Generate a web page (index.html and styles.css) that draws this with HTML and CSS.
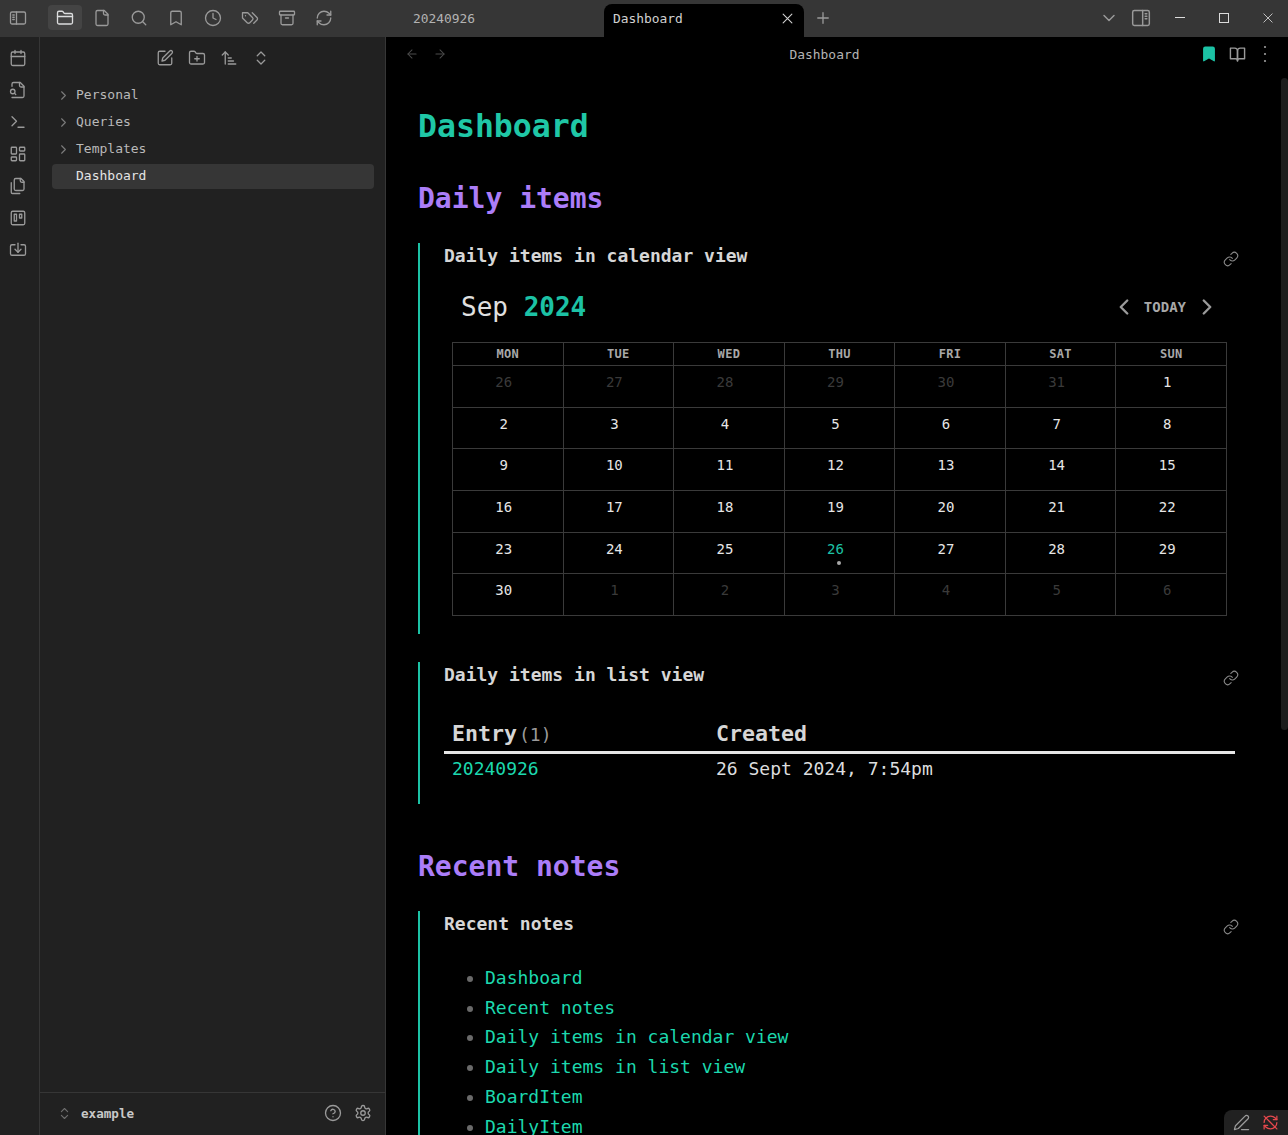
FILE: index.html
```html
<!DOCTYPE html>
<html lang="en">
<head>
  <meta charset="UTF-8">
  <title>Dashboard</title>
  <link rel="stylesheet" href="styles.css">
</head>
<body>
  <div class="app">
    <header class="titlebar">
      <div class="title-left">
        <span class="ti first"><svg viewBox="0 0 24 24"><rect x="2" y="4" width="20" height="16" rx="2"/><path d="M10 4v16M5 8h2M5 11h2M5 14h2"/></svg></span>
        <span class="ti active"><svg viewBox="0 0 24 24"><path d="M20 20a2 2 0 0 0 2-2V8a2 2 0 0 0-2-2h-7.9a2 2 0 0 1-1.69-.9L9.6 3.9A2 2 0 0 0 7.93 3H4a2 2 0 0 0-2 2v13a2 2 0 0 0 2 2Z"/><path d="M2 10h20"/></svg></span>
        <span class="ti"><svg viewBox="0 0 24 24"><path d="M15 2H6a2 2 0 0 0-2 2v16a2 2 0 0 0 2 2h12a2 2 0 0 0 2-2V7Z"/><path d="M14 2v4a2 2 0 0 0 2 2h4"/></svg></span>
        <span class="ti"><svg viewBox="0 0 24 24"><circle cx="11" cy="11" r="8"/><path d="m21 21-4.3-4.3"/></svg></span>
        <span class="ti"><svg viewBox="0 0 24 24"><path d="m19 21-7-4-7 4V5a2 2 0 0 1 2-2h10a2 2 0 0 1 2 2v16z"/></svg></span>
        <span class="ti"><svg viewBox="0 0 24 24"><circle cx="12" cy="12" r="10"/><path d="M12 6v6l4 2"/></svg></span>
        <span class="ti"><svg viewBox="0 0 24 24"><path d="M9 5H2v7l6.29 6.29c.94.94 2.48.94 3.42 0l3.58-3.58c.94-.94.94-2.48 0-3.42L9 5Z"/><path d="M6 9.01V9"/><path d="m15 5 6.3 6.3a2.4 2.4 0 0 1 0 3.4L17 19"/></svg></span>
        <span class="ti"><svg viewBox="0 0 24 24"><rect x="2" y="3" width="20" height="5" rx="1"/><path d="M4 8v11a2 2 0 0 0 2 2h12a2 2 0 0 0 2-2V8"/><path d="M10 12h4"/></svg></span>
        <span class="ti"><svg viewBox="0 0 24 24"><path d="M3 12a9 9 0 0 1 9-9 9.75 9.75 0 0 1 6.74 2.74L21 8"/><path d="M21 3v5h-5"/><path d="M21 12a9 9 0 0 1-9 9 9.75 9.75 0 0 1-6.74-2.74L3 16"/><path d="M8 16H3v5"/></svg></span>
      </div>
      <div class="tabs">
        <div class="tab">20240926</div>
        <div class="tab tab-current">
          <span>Dashboard</span>
          <svg viewBox="0 0 24 24"><path d="M5 5l14 14M19 5 5 19"/></svg>
        </div>
        <svg class="tab-plus" viewBox="0 0 24 24"><path d="M5 12h14M12 5v14"/></svg>
      </div>
      <div class="title-right">
        <svg class="tab-list" viewBox="0 0 24 24"><path d="m6 9 6 6 6-6"/></svg>
        <svg class="right-toggle" viewBox="0 0 24 24"><rect x="2" y="3" width="20" height="18" rx="2"/><path d="M14 3v18M17 7h2M17 10h2M17 13h2"/></svg>
        <div class="win-btns">
          <span class="win-min"></span>
          <span class="win-max"></span>
          <svg viewBox="0 0 12 12"><path d="m1 1 10 10M11 1 1 11"/></svg>
        </div>
      </div>
    </header>

    <div class="workspace">
      <nav class="ribbon">
        <svg viewBox="0 0 24 24"><path d="M8 2v4M16 2v4"/><rect x="3" y="4" width="18" height="18" rx="2"/><path d="M3 10h18"/></svg>
        <svg viewBox="0 0 24 24"><path d="M4 22h14a2 2 0 0 0 2-2V7l-5-5H6a2 2 0 0 0-2 2v3"/><path d="M14 2v4a2 2 0 0 0 2 2h4"/><path d="M5 17a3 3 0 1 0 0-6 3 3 0 0 0 0 6z"/><path d="m9 18-1.5-1.5"/></svg>
        <svg viewBox="0 0 24 24"><path d="m4 17 6-6-6-6"/><path d="M12 19h8"/></svg>
        <svg viewBox="0 0 24 24"><rect x="3" y="3" width="7" height="9" rx="1"/><rect x="14" y="3" width="7" height="5" rx="1"/><rect x="14" y="12" width="7" height="9" rx="1"/><rect x="3" y="16" width="7" height="5" rx="1"/></svg>
        <svg viewBox="0 0 24 24"><path d="M20 7h-3a2 2 0 0 1-2-2V2"/><path d="M9 18a2 2 0 0 1-2-2V4a2 2 0 0 1 2-2h7l4 4v10a2 2 0 0 1-2 2Z"/><path d="M3 7.6v12.8A1.6 1.6 0 0 0 4.6 22h9.8"/></svg>
        <svg viewBox="0 0 24 24"><rect x="3" y="3" width="18" height="18" rx="2"/><rect x="7" y="7" width="3" height="9"/><rect x="14" y="7" width="3" height="5"/></svg>
        <svg viewBox="0 0 24 24"><path d="M12 3v12"/><path d="m8 11 4 4 4-4"/><path d="M8 5H4a2 2 0 0 0-2 2v10a2 2 0 0 0 2 2h16a2 2 0 0 0 2-2V7a2 2 0 0 0-2-2h-4"/></svg>
      </nav>

      <aside class="sidebar">
        <div class="nav-actions">
          <svg viewBox="0 0 24 24"><path d="M12 3H5a2 2 0 0 0-2 2v14a2 2 0 0 0 2 2h14a2 2 0 0 0 2-2v-7"/><path d="M18.375 2.625a2.121 2.121 0 1 1 3 3L12 15l-4 1 1-4Z"/></svg>
          <svg viewBox="0 0 24 24"><path d="M12 10v6M9 13h6"/><path d="M20 20a2 2 0 0 0 2-2V8a2 2 0 0 0-2-2h-7.9a2 2 0 0 1-1.69-.9L9.6 3.9A2 2 0 0 0 7.93 3H4a2 2 0 0 0-2 2v13a2 2 0 0 0 2 2Z"/></svg>
          <svg viewBox="0 0 24 24"><path d="m3 8 4-4 4 4"/><path d="M7 4v16"/><path d="M11 12h4M11 16h7M11 20h10"/></svg>
          <svg viewBox="0 0 24 24"><path d="m7 15 5 5 5-5"/><path d="m7 9 5-5 5 5"/></svg>
        </div>
        <ul class="tree">
          <li class="tree-item"><svg viewBox="0 0 24 24"><path d="m9 18 6-6-6-6"/></svg>Personal</li>
          <li class="tree-item"><svg viewBox="0 0 24 24"><path d="m9 18 6-6-6-6"/></svg>Queries</li>
          <li class="tree-item"><svg viewBox="0 0 24 24"><path d="m9 18 6-6-6-6"/></svg>Templates</li>
          <li class="tree-item selected">Dashboard</li>
        </ul>
        <div class="vault-bar">
          <svg class="vault-switch" viewBox="0 0 24 24"><path d="m7 15 5 5 5-5"/><path d="m7 9 5-5 5 5"/></svg>
          <span class="vault-name">example</span>
          <svg viewBox="0 0 24 24"><circle cx="12" cy="12" r="10"/><path d="M9.09 9a3 3 0 0 1 5.83 1c0 2-3 3-3 3"/><path d="M12 17h.01"/></svg>
          <svg viewBox="0 0 24 24"><path d="M12.22 2h-.44a2 2 0 0 0-2 2v.18a2 2 0 0 1-1 1.73l-.43.25a2 2 0 0 1-2 0l-.15-.08a2 2 0 0 0-2.73.73l-.22.38a2 2 0 0 0 .73 2.73l.15.1a2 2 0 0 1 1 1.72v.51a2 2 0 0 1-1 1.74l-.15.09a2 2 0 0 0-.73 2.73l.22.38a2 2 0 0 0 2.73.73l.15-.08a2 2 0 0 1 2 0l.43.25a2 2 0 0 1 1 1.73V20a2 2 0 0 0 2 2h.44a2 2 0 0 0 2-2v-.18a2 2 0 0 1 1-1.73l.43-.25a2 2 0 0 1 2 0l.15.08a2 2 0 0 0 2.73-.73l.22-.39a2 2 0 0 0-.73-2.73l-.15-.08a2 2 0 0 1-1-1.74v-.5a2 2 0 0 1 1-1.74l.15-.09a2 2 0 0 0 .73-2.73l-.22-.38a2 2 0 0 0-2.73-.73l-.15.08a2 2 0 0 1-2 0l-.43-.25a2 2 0 0 1-1-1.73V4a2 2 0 0 0-2-2z"/><circle cx="12" cy="12" r="3"/></svg>
        </div>
      </aside>

      <main class="main">
        <div class="view-header">
          <div class="view-nav">
            <svg viewBox="0 0 24 24"><path d="m12 19-7-7 7-7"/><path d="M19 12H5"/></svg>
            <svg viewBox="0 0 24 24"><path d="m12 5 7 7-7 7"/><path d="M5 12h14"/></svg>
          </div>
          <div class="view-title">Dashboard</div>
          <div class="view-actions">
            <svg class="bookmarked" viewBox="0 0 24 24"><path d="m19 21-7-4-7 4V5a2 2 0 0 1 2-2h10a2 2 0 0 1 2 2v16z"/></svg>
            <svg class="reading" viewBox="0 0 24 24"><path d="M2 3h6a4 4 0 0 1 4 4v14a3 3 0 0 0-3-3H2z"/><path d="M22 3h-6a4 4 0 0 0-4 4v14a3 3 0 0 1 3-3h7z"/></svg>
            <svg class="more" viewBox="0 0 24 24"><path d="M12 5h.01M12 12h.01M12 19h.01"/></svg>
          </div>
        </div>

        <div class="note">
          <h1>Dashboard</h1>
          <h2>Daily items</h2>

          <section class="embed embed-calendar">
            <svg class="embed-link" viewBox="0 0 24 24"><path d="M10 13a5 5 0 0 0 7.54.54l3-3a5 5 0 0 0-7.07-7.07l-1.72 1.71"/><path d="M14 11a5 5 0 0 0-7.54-.54l-3 3a5 5 0 0 0 7.07 7.07l1.71-1.71"/></svg>
            <h4>Daily items in calendar view</h4>
            <div class="cal-head">
              <div class="cal-title">Sep <b>2024</b></div>
              <div class="cal-nav">
                <svg viewBox="0 0 24 24"><path d="m15 18-6-6 6-6"/></svg>
                <span>TODAY</span>
                <svg viewBox="0 0 24 24"><path d="m9 18 6-6-6-6"/></svg>
              </div>
            </div>
            <table class="cal">
              <thead>
                <tr><th>MON</th><th>TUE</th><th>WED</th><th>THU</th><th>FRI</th><th>SAT</th><th>SUN</th></tr>
              </thead>
              <tbody>
                <tr><td class="out">26</td><td class="out">27</td><td class="out">28</td><td class="out">29</td><td class="out">30</td><td class="out">31</td><td>1</td></tr>
                <tr><td>2</td><td>3</td><td>4</td><td>5</td><td>6</td><td>7</td><td>8</td></tr>
                <tr><td>9</td><td>10</td><td>11</td><td>12</td><td>13</td><td>14</td><td>15</td></tr>
                <tr><td>16</td><td>17</td><td>18</td><td>19</td><td>20</td><td>21</td><td>22</td></tr>
                <tr><td>23</td><td>24</td><td>25</td><td class="today">26<i class="dot"></i></td><td>27</td><td>28</td><td>29</td></tr>
                <tr><td>30</td><td class="out">1</td><td class="out">2</td><td class="out">3</td><td class="out">4</td><td class="out">5</td><td class="out">6</td></tr>
              </tbody>
            </table>
          </section>

          <section class="embed embed-list">
            <svg class="embed-link" viewBox="0 0 24 24"><path d="M10 13a5 5 0 0 0 7.54.54l3-3a5 5 0 0 0-7.07-7.07l-1.72 1.71"/><path d="M14 11a5 5 0 0 0-7.54-.54l-3 3a5 5 0 0 0 7.07 7.07l1.71-1.71"/></svg>
            <h4>Daily items in list view</h4>
            <table class="dv">
              <thead>
                <tr><th class="dv-first">Entry<span class="count">(1)</span></th><th>Created</th></tr>
              </thead>
              <tbody>
                <tr><td><a href="#">20240926</a></td><td>26 Sept 2024, 7:54pm</td></tr>
              </tbody>
            </table>
          </section>

          <h2 class="h2-recent">Recent notes</h2>

          <section class="embed embed-recent">
            <svg class="embed-link" viewBox="0 0 24 24"><path d="M10 13a5 5 0 0 0 7.54.54l3-3a5 5 0 0 0-7.07-7.07l-1.72 1.71"/><path d="M14 11a5 5 0 0 0-7.54-.54l-3 3a5 5 0 0 0 7.07 7.07l1.71-1.71"/></svg>
            <h4>Recent notes</h4>
            <ul class="notes">
              <li><a href="#">Dashboard</a></li>
              <li><a href="#">Recent notes</a></li>
              <li><a href="#">Daily items in calendar view</a></li>
              <li><a href="#">Daily items in list view</a></li>
              <li><a href="#">BoardItem</a></li>
              <li><a href="#">DailyItem</a></li>
            </ul>
          </section>
        </div>

        <div class="scrollbar"></div>
      </main>
    </div>

    <div class="status">
      <svg viewBox="0 0 24 24"><path d="M17 3a2.85 2.83 0 1 1 4 4L7.5 20.5 2 22l1.5-5.5Z"/><path d="M12 22h10"/></svg>
      <svg class="sync-off" viewBox="0 0 24 24"><path d="M3 12a9 9 0 0 1 9-9 9.75 9.75 0 0 1 6.74 2.74L21 8"/><path d="M21 3v5h-5"/><path d="M21 12a9 9 0 0 1-9 9 9.75 9.75 0 0 1-6.74-2.74L3 16"/><path d="M8 16H3v5"/><path d="m3 3 18 18"/></svg>
    </div>
  </div>
</body>
</html>
```

FILE: styles.css
```css
* {
  box-sizing: border-box;
}

html, body {
  margin: 0;
  height: 100%;
  overflow: hidden;
  background: #000;
}

body {
  font-family: "DejaVu Sans Mono", "Liberation Mono", monospace;
  color: #dcddde;
}

svg {
  width: 18px;
  height: 18px;
  flex: none;
  fill: none;
  stroke: #9a9a9a;
  stroke-width: 1.75;
  stroke-linecap: round;
  stroke-linejoin: round;
}

.app {
  position: relative;
  display: flex;
  flex-direction: column;
  width: 1288px;
  height: 1135px;
  overflow: hidden;
}

/* title bar */
.titlebar {
  display: flex;
  flex: none;
  height: 37px;
  background: #363636;
}

.title-left {
  display: flex;
  align-items: center;
  width: 386px;
  padding-left: 9px;
  padding-bottom: 2px;
}

.ti {
  display: flex;
  align-items: center;
  justify-content: center;
  width: 34px;
  height: 25px;
  margin-right: 3px;
  border-radius: 4px;
}

.ti.first {
  margin-right: 21px;
  width: 18px;
}

.ti.active {
  background: #444;
}

.ti.active svg {
  stroke: #dcddde;
}

.tabs {
  display: flex;
  align-items: flex-end;
  flex: 1;
  padding-left: 18px;
}

.tab {
  display: flex;
  align-items: center;
  width: 200px;
  height: 33px;
  padding: 0 9px 4px;
  font-size: 12.9px;
  color: #b3b3b3;
}

.tab-current {
  position: relative;
  justify-content: space-between;
  background: #000;
  border-radius: 8px 8px 0 0;
  color: #d0d0d0;
  padding-bottom: 5px;
}

.tab-current svg {
  width: 15px;
  height: 15px;
  stroke: #d0d0d0;
  margin-right: 0;
}

.tab-plus {
  width: 18px;
  height: 18px;
  margin: 0 0 10px 10px;
}

.title-right {
  display: flex;
  align-items: center;
  padding-bottom: 2px;
}

.tab-list {
  width: 20px;
  height: 20px;
  margin: 0 12px 0 -3px;
}

.right-toggle {
  width: 20px;
  height: 20px;
  margin-right: 24px;
}

.win-btns {
  display: flex;
  align-items: center;
  gap: 22px;
  padding-right: 15px;
}

.win-btns svg {
  width: 10px;
  height: 10px;
  stroke: #dcdcdc;
  stroke-width: 1;
}

.win-min {
  width: 10px;
  height: 1px;
  margin-right: 12px;
  background: #dcdcdc;
}

.win-max {
  width: 10px;
  height: 10px;
  margin-right: 12px;
  border: 1px solid #dcdcdc;
}

/* left side */
.workspace {
  display: flex;
  flex: 1;
  min-height: 0;
}

.ribbon {
  display: flex;
  flex-direction: column;
  align-items: center;
  flex: none;
  gap: 14px;
  width: 40px;
  padding: 12px 3px 0 0;
  background: #212121;
  border-right: 1px solid #363636;
}

.sidebar {
  display: flex;
  flex-direction: column;
  flex: none;
  width: 346px;
  background: #212121;
  border-right: 1px solid #363636;
}

.nav-actions {
  display: flex;
  justify-content: center;
  gap: 14px;
  height: 46px;
  padding-top: 12px;
}

.tree {
  flex: 1;
  list-style: none;
  margin: 0;
  padding: 0 11px 0 12px;
}

.tree-item {
  display: flex;
  align-items: center;
  height: 25px;
  margin-bottom: 2px;
  padding-left: 24px;
  padding-bottom: 2px;
  font-size: 13px;
  color: #b9b9b9;
  border-radius: 4px;
}

.tree-item svg {
  width: 15px;
  height: 15px;
  margin-top: 2px;
  margin-left: -20px;
  margin-right: 5px;
  stroke: #7c7c7c;
}

.tree-item.selected {
  background: #363636;
  color: #e4e4e4;
}

.vault-bar {
  display: flex;
  align-items: center;
  gap: 12px;
  height: 43px;
  padding: 0 13px 2px 17px;
  border-top: 1px solid #363636;
}

.vault-switch {
  width: 15px;
  height: 15px;
  stroke: #6e6e6e;
}

.vault-name {
  flex: 1;
  margin-left: -3px;
  font-size: 12.6px;
  font-weight: bold;
  color: #c8c8c8;
}

/* main pane */
.main {
  position: relative;
  flex: 1;
  min-width: 0;
  background: #000;
  overflow: hidden;
}

.view-header {
  display: flex;
  align-items: center;
  height: 34px;
  padding: 0 16px 0 19px;
}

.view-nav {
  display: flex;
  gap: 14px;
}

.view-nav svg {
  width: 14px;
  height: 14px;
  stroke: #4c4c4c;
}

.view-title {
  flex: 1;
  text-align: center;
  font-size: 12.9px;
  color: #b3b3b3;
}

.view-actions {
  display: flex;
  align-items: center;
  gap: 14px;
}

.view-actions svg {
  width: 14px;
  height: 14px;
}

.view-actions .more {
  width: 24px;
  height: 24px;
  margin: 0 -5px;
  stroke-width: 2.2;
}

.view-actions .reading {
  width: 17px;
  height: 17px;
  margin: 0 -1.5px;
  stroke-width: 2;
}

.view-actions .bookmarked {
  width: 18px;
  height: 18px;
  margin: 0 -2px;
  fill: #1cc2a5;
  stroke: #1cc2a5;
}

.note {
  padding: 35px 50px 0 32px;
}

h1 {
  margin: 0;
  font-size: 31.5px;
  line-height: 40px;
  font-weight: bold;
  color: #1fc7a6;
}

h2 {
  margin: 35px 0 0;
  font-size: 28px;
  line-height: 36px;
  font-weight: bold;
  color: #ab7df8;
}

.h2-recent {
  margin-top: 45px;
}

.embed {
  position: relative;
  margin-top: 26px;
  padding: 0 0 0 24px;
  border-left: 2px solid #1cc2a5;
}

.embed h4 {
  margin: 0;
  font-size: 18px;
  line-height: 26px;
  font-weight: bold;
  color: #d6d6d6;
}

.embed-link {
  position: absolute;
  top: 8px;
  right: -1px;
  width: 16px;
  height: 16px;
  stroke: #8a8a8a;
  stroke-width: 1.6;
}

.embed-calendar {
  height: 391px;
}

.embed-list {
  height: 142px;
  margin-top: 28px;
}

.embed-recent {
  margin-top: 26px;
  padding-bottom: 60px;
}

/* calendar */
.cal-head {
  display: flex;
  align-items: center;
  justify-content: space-between;
  height: 60px;
  padding: 15px 18px 0 17px;
}

.cal-title {
  font-size: 26px;
  line-height: 32px;
  color: #e0e0e0;
}

.cal-title b {
  color: #1cc2a5;
}

.cal-nav {
  display: flex;
  align-items: center;
  gap: 7px;
  font-size: 14px;
  font-weight: bold;
  color: #a8a8a8;
}

.cal-nav span {
  margin-right: 1px;
}

.cal-nav svg {
  width: 26px;
  height: 26px;
  stroke-width: 2.2;
}

.cal {
  width: 775px;
  margin: 13px 0 0 8px;
  border-collapse: collapse;
  table-layout: fixed;
}

.cal th, .cal td {
  border: 1px solid #3a3a3a;
  padding: 0;
  text-align: center;
}

.cal th {
  height: 23px;
  font-size: 12px;
  letter-spacing: .3px;
  color: #a8a8a8;
}

.cal td {
  position: relative;
  height: 41.7px;
  padding: 8px 8px 0 0;
  vertical-align: top;
  font-size: 14px;
  line-height: 17px;
  color: #e6e6e6;
}

.cal td.out {
  color: #3a3a3a;
}

.cal td.today {
  color: #1cc2a5;
}

.dot {
  position: absolute;
  left: 52px;
  top: 28px;
  width: 4px;
  height: 4px;
  border-radius: 50%;
  background: #a8a8a8;
}

/* dataview list */
.dv {
  width: 791px;
  margin-top: 26px;
  border-collapse: collapse;
  table-layout: fixed;
}

.dv th {
  height: 38px;
  padding: 2px 8px 0;
  text-align: left;
  font-size: 21.6px;
  font-weight: bold;
  color: #d6d6d6;
  border-bottom: 3px solid #e6e6e6;
}

.dv .dv-first {
  width: 264px;
}

.count {
  margin-left: 2px;
  font-size: 18px;
  font-weight: normal;
  color: #9a9a9a;
}

.dv td {
  padding: 2px 8px 0;
  font-size: 18px;
  line-height: 26px;
  color: #dcddde;
}

a {
  color: #1cd8ae;
  text-decoration: none;
}

/* recent list */
.notes {
  margin: 26px 0 0;
  padding-left: 41px;
  font-size: 18px;
  line-height: 29.7px;
}

.notes li::marker {
  color: #6a6a6a;
}

.scrollbar {
  position: absolute;
  top: 41px;
  right: 0;
  width: 7px;
  height: 652px;
  background: #1c1c1c;
  border-radius: 4px;
}

.status {
  position: absolute;
  right: 0;
  bottom: 0;
  display: flex;
  align-items: center;
  gap: 12px;
  height: 25px;
  padding: 0 9px;
  background: #212121;
  border-top-left-radius: 8px;
}

.status svg {
  width: 17px;
  height: 17px;
}

.status .sync-off {
  stroke: #e5484d;
}
```
